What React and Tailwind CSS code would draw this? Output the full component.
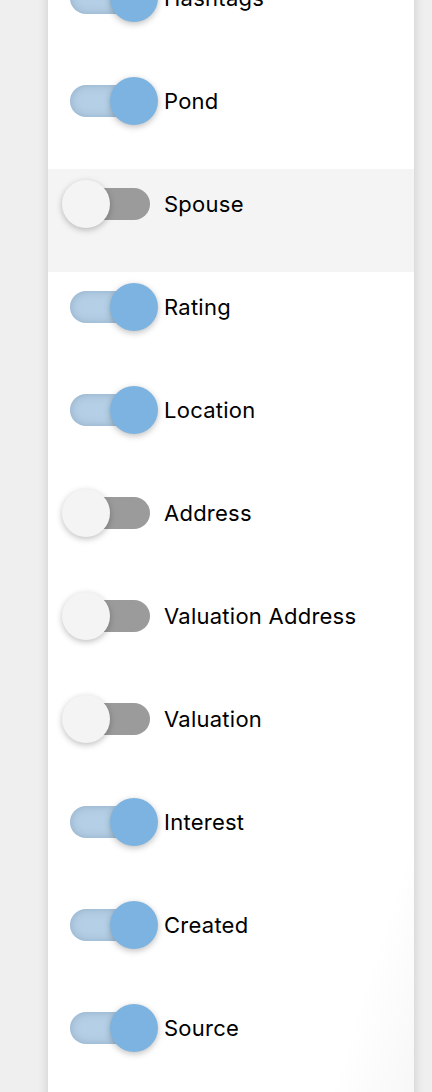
import React, { useState } from 'react'

const initial = [
  ['Hashtags', true],
  ['Pond', true],
  ['Spouse', false],
  ['Rating', true],
  ['Location', true],
  ['Address', false],
  ['Valuation Address', false],
  ['Valuation', false],
  ['Interest', true],
  ['Created', true],
  ['Source', true],
]

function Toggle({ on, onClick }) {
  return (
    <button onClick={onClick} className="relative w-[96px] h-[48px] shrink-0">
      <span
        className={
          'absolute left-[8px] top-[8px] w-[80px] h-[32px] rounded-full ' +
          (on ? 'bg-[#b5d0e6] shadow-[inset_0_0_10px_rgba(80,110,140,0.35)]' : 'bg-[#9b9b9b]')
        }
      />
      <span
        className={
          'absolute top-0 w-[48px] h-[48px] rounded-full shadow-[0_2px_6px_rgba(0,0,0,0.25)] ' +
          (on ? 'left-[48px] bg-[#7db3e0]' : 'left-0 bg-[#f4f4f4]')
        }
      />
    </button>
  )
}

export default function App() {
  const [cols, setCols] = useState(initial)

  function flip(i) {
    setCols(cols.map((c, j) => (j === i ? [c[0], !c[1]] : c)))
  }

  return (
    <div className="w-[432px] h-[1092px] overflow-hidden bg-[#efefef] pl-[48px]" style={{ fontFamily: 'Inter, "Noto Sans", sans-serif' }}>
      <div className="w-[366px] min-h-[1140px] -mt-[37px] bg-white shadow-[0_0_10px_rgba(0,0,0,0.16)] bg-gradient-to-br from-white from-88% to-[#f7f7f7]">
        {cols.map(([name, on], i) => (
          <div
            key={name}
            className={'h-[103px] pt-[11px] pl-[14px] flex items-start ' + (name === 'Spouse' ? 'bg-[#f4f4f4]' : '')}
          >
            <div className="flex items-center gap-[6px]">
              <Toggle on={on} onClick={() => flip(i)} />
              <span className="text-[22px] text-black tracking-[0.25px]">{name}</span>
            </div>
          </div>
        ))}
      </div>
    </div>
  )
}
